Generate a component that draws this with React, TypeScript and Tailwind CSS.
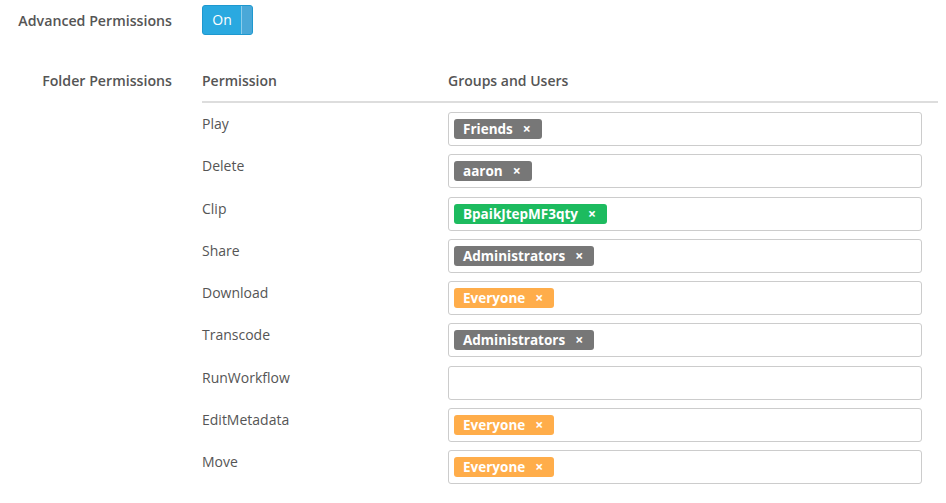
import type { ReactNode } from "react";

type Tone = "gray" | "green" | "orange";

interface PermissionRow {
  name: string;
  tags: { label: string; tone: Tone }[];
}

const rows: PermissionRow[] = [
  { name: "Play", tags: [{ label: "Friends", tone: "gray" }] },
  { name: "Delete", tags: [{ label: "aaron", tone: "gray" }] },
  { name: "Clip", tags: [{ label: "BpaikJtepMF3qty", tone: "green" }] },
  { name: "Share", tags: [{ label: "Administrators", tone: "gray" }] },
  { name: "Download", tags: [{ label: "Everyone", tone: "orange" }] },
  { name: "Transcode", tags: [{ label: "Administrators", tone: "gray" }] },
  { name: "RunWorkflow", tags: [] },
  { name: "EditMetadata", tags: [{ label: "Everyone", tone: "orange" }] },
  { name: "Move", tags: [{ label: "Everyone", tone: "orange" }] },
];

const toneClass: Record<Tone, string> = {
  gray: "bg-[#777777]",
  green: "bg-[#1dbb5f]",
  orange: "bg-[#ffad4a]",
};

export default function App() {
  return (
    <div className="min-h-[503px] w-[946px] bg-white pr-2 pt-[5px] font-['Open_Sans',sans-serif] text-[14px] text-[#555555]">
      {/* advanced permissions toggle */}
      <div className="flex items-center">
        <FieldLabel className="pt-[2px]">Advanced Permissions</FieldLabel>
        <Toggle />
      </div>

      {/* folder permissions table */}
      <div className="mt-[28px] flex items-start">
        <FieldLabel className="pt-2">Folder Permissions</FieldLabel>
        <div className="flex-1">
          <div className="flex border-b-2 border-[#dddddd] pb-[10px] pt-2 font-semibold leading-5">
            <div className="w-[246px]">Permission</div>
            <div>Groups and Users</div>
          </div>
          {rows.map((row) => (
            <div key={row.name} className="flex h-[42.25px] items-start">
              <div className="w-[246px] pt-[11px] leading-5">{row.name}</div>
              <div className="flex-1 pr-4 pt-[9px]">
                <div className="flex h-[34px] items-center gap-1 rounded-[3px] border border-[#cccccc] bg-white pl-[5px]">
                  {row.tags.map((tag) => (
                    <Tag key={tag.label} tone={tag.tone}>
                      {tag.label}
                    </Tag>
                  ))}
                </div>
              </div>
            </div>
          ))}
        </div>
      </div>
    </div>
  );
}

function FieldLabel({
  children,
  className = "",
}: {
  children: ReactNode;
  className?: string;
}) {
  return (
    <div
      className={[
        "mr-[30px] w-[172px] shrink-0 text-right text-[14.2px] font-semibold leading-5",
        className,
      ].join(" ")}
    >
      {children}
    </div>
  );
}

function Toggle() {
  return (
    <div className="flex h-[30px] w-[51px] overflow-hidden rounded-[3px] border border-[#1e98cf] bg-[#2aa9e0]">
      <span className="flex flex-1 items-center justify-center pb-[1px] text-[14px] text-white">
        On
      </span>
      <span className="w-[11px] border-l border-[#8ccdeb] bg-[#4aa8d8]" />
    </div>
  );
}

function Tag({ tone, children }: { tone: Tone; children: ReactNode }) {
  return (
    <span
      className={[
        "inline-flex h-5 items-center rounded-[3px] pl-[9px] pr-[11px] text-[13.5px] font-bold leading-5 text-white",
        toneClass[tone],
      ].join(" ")}
    >
      {children}
      <span className="ml-[10px] text-[14px] font-bold">×</span>
    </span>
  );
}
